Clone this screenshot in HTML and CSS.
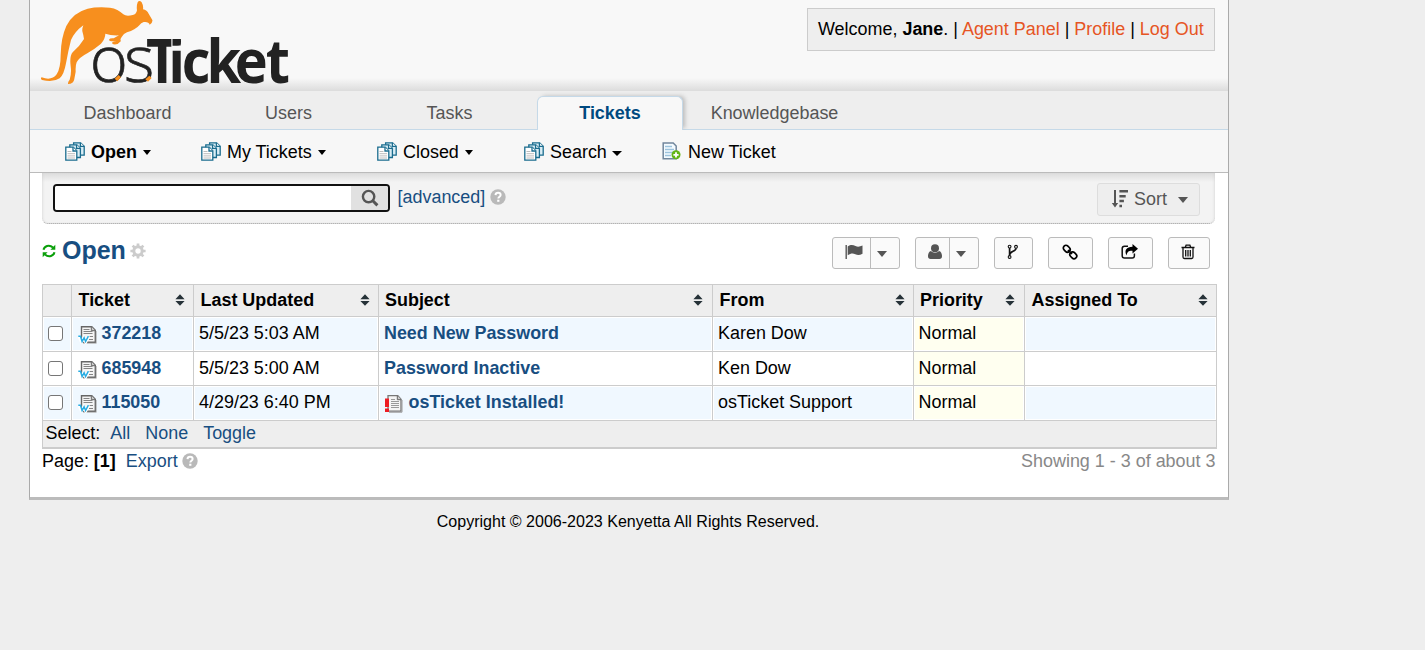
FILE: index.html
```html
<!DOCTYPE html>
<html lang="en">
<head>
<meta charset="utf-8">
<title>osTicket :: Staff Control Panel</title>
<link rel="stylesheet" href="styles.css">
</head>
<body>
<svg class="defs" width="0" height="0">
  <symbol id="docs" viewBox="0 0 20 19">
    <g stroke="#1a6c8e" stroke-width="1.3" fill="#fff">
      <path d="M8.6 .8h7l3.6 3.4v9H8.6z" fill="#d9edf5"/><path d="M15.4 .8v3.6h3.8" />
      <path d="M4.8 2.8h7l3.6 3.4v9.3H4.8z" fill="#d9edf5"/><path d="M11.6 2.8v3.6h3.8"/>
      <path d="M.8 5.2h7.4l3.6 3.6v9.3H.8z"/><path d="M8 5.2v3.8h3.8"/>
    </g>
    <path d="M2.5 9.5h4M2.5 11.7h7.5M2.5 13.9h7.5M2.5 16h7.5" stroke="#bcbcbc"/>
  </symbol>
  <symbol id="webdoc" viewBox="0 0 19 19">
    <path d="M3.500 1.700h10.300l3.500 3.500v12H3.500z" fill="#f4f4f4" stroke="#666" stroke-width="1.400"/>
    <path d="M13.300 1.500v4.200h4" fill="#ccc" stroke="#666"/>
    <path d="M5.500 4.500h6M5.500 6.500h9M5.500 8.500h9M11 11.500h4M11 14.500h4" stroke="#858585"/>
    <path d="M18.300 6v12.300H5" fill="none" stroke="#aaa" stroke-width=".8"/>
    <path d="M1 11.500l2.500 5.500 2.200-4 2 4 3-6" fill="none" stroke="#fff" stroke-width="3"/>
    <path d="M.3 11.200h2.200l1.600 5.300 2-3.800 1.500 3.800 2.800-5.300" fill="none" stroke="#27ace3" stroke-width="1.500"/>
  </symbol>
  <symbol id="sorter" viewBox="0 0 10 12"><path d="M5 .3l4.600 5H.4zM5 11.800L.4 6.900h9.200z" fill="#263238"/></symbol>
  <symbol id="help" viewBox="0 0 16 16">
    <circle cx="8" cy="8" r="7.700" fill="#b9b9b9"/>
    <path d="M5.500 6.100c.1-1.500 1.100-2.300 2.600-2.300 1.400 0 2.500.8 2.500 2.100 0 1.700-2.200 1.800-2.300 3.600" fill="none" stroke="#fff" stroke-width="2"/>
    <path d="M7.200 10.700h2.200v2.100H7.200z" fill="#fff"/>
  </symbol>
</svg>
<div class="page">
  <header class="header">
    <svg class="logo" width="275" height="90" viewBox="0 0 825 270">
      <path fill="#f78f1e" d="M338 7Q343-1 350 7Q356 18 354 28Q366 30 371 41L382 60Q384 68 374 74Q371 64 356 66Q348 69 343 76Q331 90 306 97Q296 101 290 111Q284 119 288 123L278 132Q267 135 262 131L262 126L275 123Q253 126 252 119Q254 114 266 115L282 106Q257 107 241 101Q241 116 228 131Q209 147 187 160Q162 173 155 187Q151 197 152 215L148 237Q146 252 129 252Q128 246 134 239Q140 221 137 199Q133 169 143 157Q163 140 177 117Q175 104 172 94Q171 86 175 76Q149 95 138 120Q130 151 123 190Q117 224 104 235Q85 248 51 240Q45 236 50 232Q80 243 95 223Q107 204 107 164Q108 113 124 78Q143 38 188 26Q215 20 255 23Q279 26 295 43Q304 50 323 45Q334 43 336 31Q334 18 338 7Z"/>
      <text class="logo-os" x="194 297" y="247">os</text>
      <g transform="scale(.92 1)"><text class="logo-ticket" x="395 466 511 592 684 785" y="248">Ticket</text></g>
      <path d="M438 98h34v19h-34z" fill="#f8f8f8"/>
      <path d="M438 117h29v20h-29z" fill="#222"/>
      <path d="M439 116h3.500v132h-3.500zM442 137h26v15h-26z" fill="#f8f8f8"/>
      <path d="M269 236l12-11 7 7-11 12zM361 238l12-11 7 7-11 11z" fill="#f78f1e"/>
    </svg>
    <div class="welcome">Welcome, <b>Jane</b>. | <a>Agent Panel</a> | <a>Profile</a> | <a>Log Out</a></div>
  </header>
  <nav class="nav">
    <a>Dashboard</a><a>Users</a><a>Tasks</a><a class="active">Tickets</a><a class="wide">Knowledgebase</a>
  </nav>
  <nav class="subnav">
    <a class="open"><svg width="20" height="19"><use href="#docs"/></svg><b>Open</b><i class="caret"></i></a>
    <a class="mine"><svg width="20" height="19"><use href="#docs"/></svg><span>My Tickets</span><i class="caret"></i></a>
    <a class="closed"><svg width="20" height="19"><use href="#docs"/></svg><span>Closed</span><i class="caret"></i></a>
    <a class="find"><svg width="20" height="19"><use href="#docs"/></svg><span>Search</span><i class="caret big"></i></a>
    <a class="new"><svg width="19" height="18" viewBox="0 0 19 18"><path d="M1.2 1h10l3 3v12.8h-13z" fill="#f5fbff" stroke="#71879d" stroke-width="1.5"/><path d="M3 4.5h7M3 7.5h9M3 10.5h8M3 13.5h6" stroke="#9cc3dd" stroke-width="1.3"/><circle cx="14" cy="12.8" r="4.5" fill="#62b515"/><path d="M14 10.2v5.2M11.4 12.8h5.2" stroke="#fff" stroke-width="1.8"/></svg><span>New Ticket</span></a>
  </nav>
  <main class="content">
    <section class="searchbar">
      <div class="searchbox"><input class="query" type="text"><button class="go"><svg width="18" height="18" viewBox="0 0 18 18" fill="none" stroke="#555"><circle cx="7.6" cy="7.6" r="5.7" stroke-width="2.4"/><path d="M11.8 11.8l4.6 4.6" stroke-width="3"/></svg></button></div>
      <a class="advanced">[advanced]</a><svg class="tip" width="16" height="16"><use href="#help"/></svg>
      <div class="sort"><svg width="17" height="18" viewBox="0 0 17 18" fill="#555"><path d="M3 0h2v13h2.2L4 17.4.8 13H3zM8.4 0H17v2.5H8.4zM8.4 4.9h6.3v2.5H8.4zM8.4 9.8h4.5v2.5H8.4zM8.4 14.7H11v2.5H8.4z"/></svg><span>Sort</span><i class="caret gray"></i></div>
    </section>
    <section class="titlebar">
      <svg width="14" height="14" viewBox="0 0 14 14"><path d="M1.500 5.800C2.200 2.400 7-.1 11 3.600M12.500 8.200C11.800 11.600 7 14.100 3 10.400" fill="none" stroke="#0a9f0a" stroke-width="2"/><path d="M13.300.8v5H8.400zM.7 13.200v-5h4.900z" fill="#0a9f0a"/></svg>
      <h2>Open</h2>
      <svg class="gear" width="16" height="16" viewBox="0 0 16 16"><g stroke="#ccc" fill="none"><circle cx="8" cy="8" r="4.2" stroke-width="3"/><path d="M8 .4v3M8 12.6v3M.4 8h3M12.6 8h3M2.6 2.6l2.2 2.2M11.2 11.2l2.2 2.2M13.4 2.6l-2.2 2.2M4.8 11.2l-2.2 2.2" stroke-width="2.7"/></g></svg>
      <div class="actions">
        <div class="btn flag"><span><svg width="18" height="16" viewBox="0 0 18 16" fill="#555"><path d="M.5 1h1.400v14H.5zM2.700 2.400c3.400-2 5.300-1.400 7.800-.3 2.500 1 4.500.5 7-.6v8.200c-2.700 1.400-4.700 1.700-7.200.5-2.500-1.100-4.500-.9-7.600 1z"/></svg></span><span><i class="caret gray"></i></span></div>
        <div class="btn user"><span><svg width="14" height="16" viewBox="0 0 14 16" fill="#555"><circle cx="7" cy="4.200" r="4"/><path d="M3 7c2.200 2.300 5.800 2.300 8 0 2 .5 3 2.500 3 5.300 0 1.800-1 2.700-2.500 2.700h-9C1 15 0 14.100 0 12.300 0 9.500 1 7.500 3 7z"/></svg></span><span><i class="caret gray"></i></span></div>
        <div class="btn fork"><svg width="12" height="16" viewBox="0 0 12 16" fill="none" stroke="#111" stroke-width="1.100"><circle cx="2.600" cy="2.600" r="1.400"/><circle cx="9" cy="2.800" r="1.400"/><circle cx="2.600" cy="13" r="1.400"/><path d="M2.600 4v7.500M9 4.300c0 3.500-5.900 2.500-6 6.200" stroke-width="1.700"/></svg></div>
        <div class="btn link"><svg width="16" height="16" viewBox="0 0 16 16" fill="none" stroke="#000" stroke-width="1.700"><rect x="1" y="2" width="7.400" height="5.400" rx="2.700" transform="rotate(45 4.700 4.700)"/><rect x="7.600" y="8.600" width="7.400" height="5.400" rx="2.700" transform="rotate(45 11.300 11.300)"/><path d="M6 6l4 4"/></svg></div>
        <div class="btn share"><svg width="17" height="16" viewBox="0 0 17 16"><path d="M7 2.200H3.500Q1.200 2.200 1.200 4.500v7.300q0 2.300 2.300 2.300h7.600q2.300 0 2.300-2.300V9.500" fill="none" stroke="#111" stroke-width="1.500"/><path d="M11.500 0L17 4.700l-5.500 4.800V6.700C8 6.500 6 7.500 5.700 11.500 2.800 6.500 5.500 2.700 11.500 2.700z"/></svg></div>
        <div class="btn trash"><svg width="14" height="16" viewBox="0 0 14 16" fill="none" stroke="#111" stroke-width="1.300"><path d="M.5 3.500h13M4.300 3.300l.8-2.100h3.800l.8 2.100M2 3.700v9.300q0 1.500 1.300 1.500h7.400q1.300 0 1.300-1.500V3.700M4.700 6v6.500M7 6v6.500M9.300 6v6.500"/></svg></div>
      </div>
    </section>
    <table class="tickets">
      <colgroup><col class="c1"><col class="c2"><col class="c3"><col class="c4"><col class="c5"><col class="c6"><col class="c7"></colgroup>
      <thead><tr><th></th>
        <th><div>Ticket<svg width="10" height="12"><use href="#sorter"/></svg></div></th>
        <th><div>Last Updated<svg width="10" height="12"><use href="#sorter"/></svg></div></th>
        <th class="snug"><div>Subject<svg width="10" height="12"><use href="#sorter"/></svg></div></th>
        <th><div>From<svg width="10" height="12"><use href="#sorter"/></svg></div></th>
        <th class="snug"><div>Priority<svg width="10" height="12"><use href="#sorter"/></svg></div></th>
        <th><div>Assigned To<svg width="10" height="12"><use href="#sorter"/></svg></div></th>
      </tr></thead>
      <tbody>
        <tr class="odd"><td><i class="check"></i></td><td><div class="num"><svg width="19" height="19"><use href="#webdoc"/></svg><a>372218</a></div></td><td>5/5/23 5:03 AM</td><td><a>Need New Password</a></td><td>Karen Dow</td><td class="normal">Normal</td><td></td></tr>
        <tr class="even"><td><i class="check"></i></td><td><div class="num"><svg width="19" height="19"><use href="#webdoc"/></svg><a>685948</a></div></td><td>5/5/23 5:00 AM</td><td><a>Password Inactive</a></td><td>Ken Dow</td><td class="normal">Normal</td><td></td></tr>
        <tr class="odd"><td><i class="check"></i></td><td><div class="num"><svg width="19" height="19"><use href="#webdoc"/></svg><a>115050</a></div></td><td>4/29/23 6:40 PM</td><td><div class="alert"><svg width="19" height="19" viewBox="0 0 19 19"><path d="M4 1.700h9.800l3.200 3.500v12H4z" fill="#f4f4f4" stroke="#777" stroke-width="1.300"/><path d="M13.300 1.500v4.200h4" fill="#ccc" stroke="#666"/><path d="M7 5.500h4M7 7.500h8M7 9.500h8M7 11.500h8M7 13.500h8" stroke="#999"/><path d="M18 6v12.200H5" fill="none" stroke="#999"/><path d="M1 4.500h4v8.500H1zM1 14.500h4v3.500H1z" fill="#ed1c24"/></svg><a>osTicket Installed!</a></div></td><td>osTicket Support</td><td class="normal">Normal</td><td></td></tr>
      </tbody>
      <tfoot><tr><td colspan="7">Select:<a class="all">All</a><a>None</a><a>Toggle</a></td></tr></tfoot>
    </table>
    <div class="pager"><span>Page: <b>[1]</b></span><a>Export</a><svg width="16" height="16"><use href="#help"/></svg><span class="showing">Showing 1 - 3 of about 3</span></div>
  </main>
</div>
<footer class="copyright">Copyright © 2006-2023 Kenyetta All Rights Reserved.</footer>
</body>
</html>
```
FILE: styles.css
```css
* { box-sizing: border-box; }
body { margin: 0; background: #eee; color: #000; font: 17.95px/20px "Liberation Sans", Arial, sans-serif; height: 650px; overflow: hidden; }
svg { display: block; flex: none; }
.defs { position: absolute; }
a { color: #184e81; }
.page { width: 1200px; height: 500px; margin-left: 29px; background: #fff; border: 1px solid #aaa; border-top: 0; border-bottom: 3px solid #bbb; }
.header { height: 91px; display: flex; justify-content: space-between; align-items: flex-start; background: linear-gradient(#f8f8f8 0, #f8f8f8 78px, #dedede 90px); border-bottom: 1px solid #ddd; }
.logo { margin-left: -5px; }
.logo-os { font: 300 195px "Open Sans", sans-serif; fill: #222; stroke: #222; stroke-width: 2; }
.logo-ticket { font: 700 182px "Open Sans", sans-serif; fill: #222; }
.welcome { margin: 8px 13px 0 0; width: 408px; height: 43px; padding: 0 10px; line-height: 41px; background: #eee; border: 1px solid #ccc; white-space: nowrap; }
.welcome a { color: #e65524; }
.nav { height: 39px; display: flex; align-items: flex-end; padding-left: 24px; background: #eee; border-bottom: 1px solid #c5d9e8; }
.nav a { width: 146px; margin-right: 15px; padding-left: 1px; height: 34px; line-height: 36px; text-align: center; color: #555; }
.nav .active { margin-bottom: -1px; height: 34px; line-height: 33px; padding-left: 0; background: #f8f8f8; border: 1px solid #c5d9e8; border-bottom: 0; border-radius: 6px 6px 0 0; box-shadow: 3px -1px 4px -1px #bbb; color: #004a80; font-weight: bold; clip-path: inset(-8px -8px 0 -8px); }
.nav .wide { margin-left: 3px; }
.subnav { height: 43px; display: flex; align-items: center; padding-left: 35px; background: #f7f7f7; border-bottom: 1px solid #bbb; }
.subnav a { display: flex; align-items: center; gap: 6px; color: #000; white-space: nowrap; }
.subnav span, .subnav b { padding-top: 2px; }
.subnav .open { width: 136px; }
.subnav .mine { width: 176px; }
.subnav .closed { width: 147px; }
.subnav .find { width: 138px; }
.subnav .new { gap: 7px; }
.caret { width: 0; height: 0; border: 4.5px solid transparent; border-top: 5px solid #000; border-bottom: 0; margin-top: 2px; }
.caret.big { border-width: 5px 5.5px 0; margin-top: 5px; margin-left: -1px; }
.caret.gray { border-width: 6px 5.5px 0; border-top-color: #555; }
.content { padding: 0 11px 0 12px; }
.searchbar { width: 1173px; height: 51px; display: flex; align-items: flex-start; padding: 11px 15px 0 11px; background: linear-gradient(#dcdcdc, #f3f3f3 9px); border-bottom: 1px dotted #aaa; border-radius: 0 0 6px 6px; box-shadow: inset 2px 0 3px -2px #ccc, inset -2px 0 3px -2px #ccc; }
.searchbox { width: 337px; height: 28px; display: flex; border: 2px solid #111; border-radius: 4px; overflow: hidden; background: #fff; }
.query { width: 296px; border: 0; outline: 0; padding: 0 4px; background: #fff; }
.go { flex: 1; border: 0; padding: 0; background: #e1e1e1; display: flex; align-items: center; justify-content: center; }
.advanced { margin: 3px 0 0 7.5px; }
.tip { margin: 5px 0 0 5px; }
.sort { margin: -1px 0 0 auto; width: 103px; height: 33px; display: flex; align-items: center; padding: 0 0 1px 13px; gap: 6px; background: #eee; border: 1px solid #ddd; border-radius: 3px; color: #555; }
.sort .caret { margin: 2px 0 0 5px; }
.titlebar { height: 60px; display: flex; align-items: center; padding-bottom: 7px; }
.titlebar h2 { margin: -2px 0 0 6px; font-size: 25px; color: #184e81; }
.gear { margin: 1px 0 0 4px; }
.actions { display: flex; margin: 5px 7px 0 auto; }
.btn { height: 32px; display: flex; align-items: center; justify-content: center; background: #fafafa; border: 1px solid #bbb; border-radius: 3px; padding: 0 2px 3px 0; margin-left: 15px; }
.flag, .user { padding: 0; }
.btn span { height: 30px; flex: 1; display: flex; align-items: center; justify-content: center; }
.btn span svg { margin: -2px 0 0 5px; }
.btn span + span { flex: none; width: 29px; border-left: 1px solid #bbb; }
.btn span .caret.gray { margin: 2px 6px 0 0; }
.flag { width: 68px; }
.user { width: 64px; }
.fork { width: 39px; }
.link, .share { width: 45px; }
.trash { width: 42px; }
.tickets { width: 1175px; table-layout: fixed; border-collapse: separate; border-spacing: 0; border-right: 1px solid #ccc; border-bottom: 2px solid #ccc; }
.c1 { width: 29px; }
.c2 { width: 122px; }
.c3 { width: 185px; }
.c4 { width: 334px; }
.c5 { width: 201px; }
.c6 { width: 111px; }
.c7 { width: 192px; }
.tickets th, .tickets td { border: 1px solid #ccc; border-right: 0; border-bottom: 0; padding: 0 0 2px 5px; text-align: left; white-space: nowrap; }
.tickets th { height: 32px; padding: 0 8px 1px 6.5px; background: #eee; }
.tickets .snug { padding: 0 9px 1px 6px; }
.tickets th div { display: flex; align-items: center; justify-content: space-between; }
.tickets tbody tr { height: 35px; }
.tickets .even { height: 34px; }
.tickets tbody a { font-weight: bold; font-size: 17.9px; }
.tickets .odd td { background: #f0f8ff; box-shadow: inset 0 0 0 1px #fff; }
.tickets tbody .normal { background: #fffff0; padding-left: 4.5px; }
.check { display: block; width: 15px; height: 15px; border: 1.5px solid #767676; border-radius: 3px; background: #fff; margin-top: 1px; }
.num { display: flex; align-items: center; padding-left: 1px; gap: 4.5px; }
.num svg, .alert svg { margin-top: 2px; margin-bottom: -1px; }
.alert { display: flex; align-items: center; gap: 5.5px; }
.tickets tfoot td { height: 27px; background: #eee; padding-left: 2.5px; }
tfoot a { margin-left: 15px; }
tfoot .all { margin-left: 10px; }
.pager { display: flex; align-items: center; padding-top: 2px; }
.pager a { margin: 0 4px 0 10px; }
.showing { margin: 0 1.5px 0 auto; color: #888; }
.copyright { width: 1256px; padding-top: 11px; font-size: 16.05px; text-align: center; }
```
